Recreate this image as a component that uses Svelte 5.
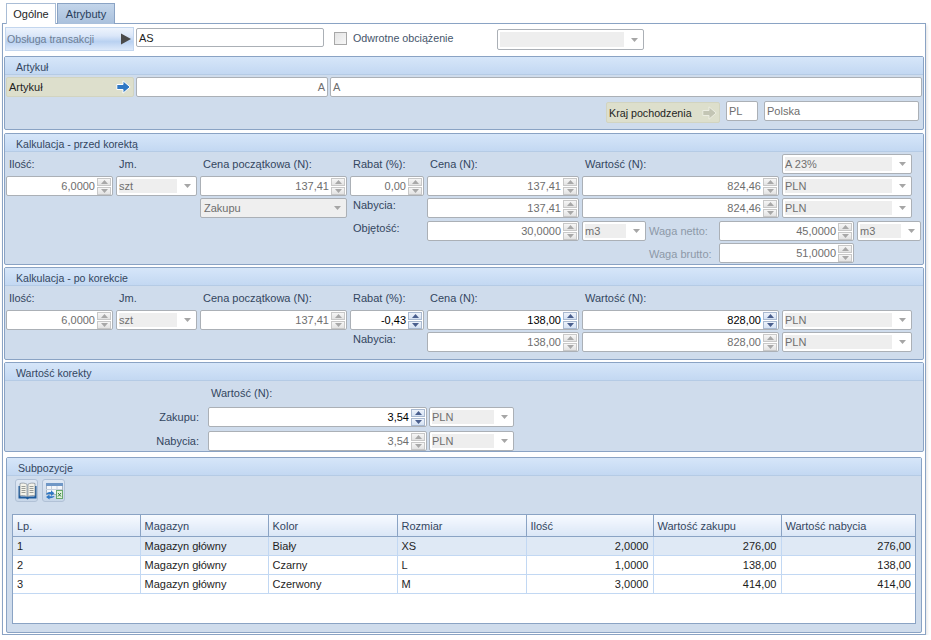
<script>
  const posRows = [
    { lp: 1, mag: 'Magazyn główny', kolor: 'Biały', rozmiar: 'XS', ilosc: '2,0000', zak: '276,00', nab: '276,00' },
    { lp: 2, mag: 'Magazyn główny', kolor: 'Czarny', rozmiar: 'L', ilosc: '1,0000', zak: '138,00', nab: '138,00' },
    { lp: 3, mag: 'Magazyn główny', kolor: 'Czerwony', rozmiar: 'M', ilosc: '3,0000', zak: '414,00', nab: '414,00' }
  ];
  const headers = ['Lp.', 'Magazyn', 'Kolor', 'Rozmiar', 'Ilość', 'Wartość zakupu', 'Wartość nabycia'];
</script>

{#snippet spin(value, pos, active = false)}
  <div class="field spin {pos}" class:active>
    <span class="val">{value}</span>
    <span class="arrows">
      <span class="arr"><svg width="7" height="4" viewBox="0 0 7 4"><path d="M3.5 0 7 4H0z" /></svg></span>
      <span class="arr"><svg width="7" height="4" viewBox="0 0 7 4"><path d="M0 0h7L3.5 4z" /></svg></span>
    </span>
  </div>
{/snippet}

{#snippet combo(value, pos)}
  <div class="field combo {pos}">
    <span class="inner">{value}</span>
    <svg class="drop" width="7" height="4" viewBox="0 0 7 4"><path d="M0 0h7L3.500 4z" /></svg>
  </div>
{/snippet}

{#snippet calcHead()}
  <span class="lbl head c1 r1">Ilość:</span>
  <span class="lbl head c2 r1">Jm.</span>
  <span class="lbl head c3 r1">Cena początkowa (N):</span>
  <span class="lbl head c4 r1">Rabat (%):</span>
  <span class="lbl head c5 r1">Cena (N):</span>
  <span class="lbl head c6 r1">Wartość (N):</span>
{/snippet}

<div class="tabs">
  <div class="tab on">Ogólne</div>
  <div class="tab">Atrybuty</div>
</div>

<div class="frame">
  <div class="toprow">
    <button class="btn-blue">
      <span>Obsługa transakcji</span>
      <svg width="12" height="12" viewBox="0 0 12 12"><path d="M1 0.500 11 6 1 11.500z" fill="#4a4a4a" /></svg>
    </button>
    <div class="field as">AS</div>
    <span class="check"></span>
    <span class="checklabel">Odwrotne obciążenie</span>
    <div class="field combo topcombo">
      <span class="inner"></span>
      <svg class="drop" width="7" height="4" viewBox="0 0 7 4"><path d="M0 0h7L3.500 4z" /></svg>
    </div>
  </div>

  <section class="panel art">
    <header>Artykuł</header>
    <div class="artrow">
      <button class="btn-olive art-btn">
        <span>Artykuł</span>
        <svg width="15" height="14" viewBox="0 0 15 14"><path d="M.8 4.500h6.200V.8L14.200 7 7 13.200V9.500H.8z" fill="#2f78c4" stroke="#fff" stroke-width="1" stroke-linejoin="round" /></svg>
      </button>
      <div class="field code">A</div>
      <div class="field name">A</div>
    </div>
    <div class="krajrow">
      <button class="btn-olive kraj-btn">
        <span>Kraj pochodzenia</span>
        <svg width="15" height="14" viewBox="0 0 15 14"><path d="M.8 4.500h6.200V.8L14.200 7 7 13.200V9.500H.8z" fill="#c3c5b4" stroke="#ecede2" stroke-width="1" stroke-linejoin="round" /></svg>
      </button>
      <div class="field dim pl">PL</div>
      <div class="field dim kraj">Polska</div>
    </div>
  </section>

  <section class="panel before">
    <header>Kalkulacja - przed korektą</header>
    <div class="calc calc-before">
      {@render calcHead()}
      {@render combo('A 23%', 'c9 r1')}

      {@render spin('6,0000', 'c1 r2')}
      {@render combo('szt', 'c2 r2')}
      {@render spin('137,41', 'c3 r2')}
      {@render spin('0,00', 'c4 r2')}
      {@render spin('137,41', 'c5 r2')}
      {@render spin('824,46', 'c6 r2')}
      {@render combo('PLN', 'c9 r2')}

      <div class="field combo flat c3 r3">
        <span class="inner">Zakupu</span>
        <svg class="drop" width="7" height="4" viewBox="0 0 7 4"><path d="M0 0h7L3.500 4z" /></svg>
      </div>
      <span class="lbl c4 r3">Nabycia:</span>
      {@render spin('137,41', 'c5 r3')}
      {@render spin('824,46', 'c6 r3')}
      {@render combo('PLN', 'c9 r3')}

      <span class="lbl c4 r4">Objętość:</span>
      {@render spin('30,0000', 'c5 r4')}
      {@render combo('m3', 'cm3 r4')}
      <span class="lbl mid off cw r4">Waga netto:</span>
      {@render spin('45,0000', 'cwv r4')}
      {@render combo('m3', 'cm3b r4')}

      <span class="lbl mid off cw r5">Waga brutto:</span>
      {@render spin('51,0000', 'cwv r5')}
    </div>
  </section>

  <section class="panel after">
    <header>Kalkulacja - po korekcie</header>
    <div class="calc calc-after">
      {@render calcHead()}

      {@render spin('6,0000', 'c1 r2')}
      {@render combo('szt', 'c2 r2')}
      {@render spin('137,41', 'c3 r2')}
      {@render spin('-0,43', 'c4 r2', true)}
      {@render spin('138,00', 'c5 r2', true)}
      {@render spin('828,00', 'c6 r2', true)}
      {@render combo('PLN', 'c9 r2')}

      <span class="lbl c4 r3">Nabycia:</span>
      {@render spin('138,00', 'c5 r3')}
      {@render spin('828,00', 'c6 r3')}
      {@render combo('PLN', 'c9 r3')}
    </div>
  </section>

  <section class="panel korekta">
    <header>Wartość korekty</header>
    <div class="kor">
      <span class="lbl head kor-h">Wartość (N):</span>
      <span class="lbl mid kor-l kr2">Zakupu:</span>
      {@render spin('3,54', 'kor-v kr2', true)}
      {@render combo('PLN', 'kor-c kr2')}
      <span class="lbl mid kor-l kr3">Nabycia:</span>
      {@render spin('3,54', 'kor-v kr3')}
      {@render combo('PLN', 'kor-c kr3')}
    </div>
  </section>

  <section class="panel sub">
    <header>Subpozycje</header>
    <div class="tools">
      <button class="tool" aria-label="Podgląd">
        <svg width="19" height="18" viewBox="0 0 19 18">
          <path d="M.5 4h2v10.500h14V4h2v12.500h-7.500l-1.500 1-1.500-1H.5z" fill="#1c5a9c" />
          <path d="M2 1.500c2.500-.7 5-.5 7 .8v12.200c-2-1-4.500-1.300-7-.8zM10 2.300c2-1.300 4.500-1.500 7-.8v12.200c-2.500-.5-5-.2-7 .8z" fill="#f4f3ea" stroke="#7f8a94" stroke-width=".7" />
          <path d="M3.500 4.500h4M3.500 6.500h4M3.500 8.500h4M3.500 10.500h4M11.500 4.500h4M11.500 6.500h4M11.500 8.500h4M11.500 10.500h4" stroke="#9a9d98" stroke-width="1" />
        </svg>
      </button>
      <button class="tool" aria-label="Eksport">
        <svg width="19" height="18" viewBox="0 0 19 18">
          <rect x="1.500" y="1.500" width="16" height="11" fill="#f3f6fa" stroke="#a9b4c2" />
          <rect x="1" y="1" width="17" height="3" fill="#6f97c6" />
          <path d="M1 7.500h16M6.500 4v8M12 4v8" stroke="#c4cfdc" stroke-width="1" />
          <rect x="11.500" y="8.500" width="6" height="8" fill="#dff0da" stroke="#6aa86f" />
          <path d="M13 11l3 3.500M16 11l-3 3.500" stroke="#2f7d3a" stroke-width="1" />
          <path d="M1 12.500c.3-1.700 2.500-2.700 5-2.300V8.500l3.500 2.800L6 14v-1.800c-2-.3-3.500 0-5 .3zM9.500 14c-.5 1.500-2.500 2.500-5 2.200V17.500L1 15l3.500-2.500v1.700c2 .2 3.500 0 5-.2z" fill="#2f78c4" />
        </svg>
      </button>
    </div>
    <div class="gridwrap">
      <table>
        <colgroup>
          <col class="w127" /><col class="w128" /><col class="w129" /><col class="w129" /><col class="w127" /><col class="w128" /><col />
        </colgroup>
        <thead>
          <tr>
            {#each headers as h}
              <th>{h}</th>
            {/each}
          </tr>
        </thead>
        <tbody>
          {#each posRows as row, i}
            <tr class:sel={i === 0}>
              <td>{row.lp}</td>
              <td>{row.mag}</td>
              <td>{row.kolor}</td>
              <td>{row.rozmiar}</td>
              <td class="num">{row.ilosc}</td>
              <td class="num">{row.zak}</td>
              <td class="num">{row.nab}</td>
            </tr>
          {/each}
        </tbody>
      </table>
    </div>
  </section>
</div>

<style>
  :global(body) {
    margin: 0;
    background: #fff;
    font-family: 'Liberation Sans', 'Noto Sans', sans-serif;
    font-size: 11px;
    color: #1e1e1e;
  }

  * {
    box-sizing: border-box;
  }

  .tabs {
    display: flex;
    height: 24px;
    padding: 3px 0 0 6px;
    gap: 1px;
    position: relative;
    z-index: 1;
  }

  .tab {
    height: 21px;
    padding-top: 4px;
    text-align: center;
    width: 58px;
    border: 1px solid #8aa3c4;
    border-bottom: 0;
    background: linear-gradient(#c3d5ea, #a9c0dc);
    color: #2a3f5c;
  }

  .tab.on {
    width: 50px;
    background: #fff;
    color: #1e1e1e;
    border-color: #a9bdd6;
  }

  .frame {
    margin-left: 2px;
    width: 924px;
    height: 612px;
    margin-top: -1px;
    border: 1px solid #8aa3c4;
    box-shadow: 1px 2px 3px rgba(0, 0, 0, 0.12);
    background: #fff;
  }

  .toprow {
    display: flex;
    align-items: flex-start;
    height: 32px;
    padding: 3px 0 0 2px;
  }

  button {
    font: inherit;
    display: flex;
    align-items: center;
    justify-content: space-between;
    padding: 0 2px 0 2px;
    cursor: default;
  }

  .btn-blue {
    width: 129px;
    height: 24px;
    padding: 0 1px;
    font-size: 10.6px;
    border: 1px solid #c3d6ee;
    background: linear-gradient(#eef4fd 0%, #dbe7f9 35%, #b9d1f1 62%, #dde9fa 100%);
    color: #6d7e95;
  }

  .btn-olive {
    background: #dddfcc;
    border: 1px solid #d2d4c0;
    border-radius: 2px;
    color: #1e1e1e;
  }

  .field {
    display: flex;
    align-items: center;
    height: 20px;
    background: #fff;
    border: 1px solid #abb0b6;
    border-radius: 2px;
    padding: 0 2px;
    min-width: 0;
  }

  .as {
    width: 188px;
    margin: 1px 0 0 2px;
    height: 19px;
  }

  .check {
    width: 13px;
    height: 13px;
    margin: 5px 0 0 10px;
    border: 1px solid #a8a8a8;
    background: linear-gradient(135deg, #e4e4e4, #f7f7f7);
  }

  .checklabel {
    margin: 5px 0 0 6px;
    width: 144px;
    font-size: 10.7px;
    color: #45556b;
  }

  .topcombo {
    width: 147px;
    height: 21px;
    margin-top: 2px;
  }

  .combo {
    justify-content: space-between;
    padding: 2px 5px 2px 2px;
    color: #6e6e6e;
  }

  .inner {
    display: block;
    flex: 1;
    height: 100%;
    margin-right: 7px;
    background: #eee;
    line-height: 15px;
  }

  .drop {
    fill: #a6a6a6;
    flex: none;
  }

  .flat {
    background: #efefef;
    padding-left: 3px;
  }

  .flat .inner {
    background: none;
  }

  .panel {
    margin-left: 1px;
    width: 920px;
    border: 1px solid #8aa3c4;
    border-radius: 2px;
    background: #cfdcec;
  }

  .panel header {
    height: 18px;
    padding: 3px 0 0 11px;
    line-height: 14px;
    font-size: 10.6px;
    background: linear-gradient(#d6e6f9, #c3d8f2);
    border-bottom: 1px solid #b5cbe5;
    color: #33465f;
  }

  .art {
    height: 74px;
  }

  .before {
    height: 132px;
    margin-top: 3px;
  }

  .after {
    height: 93px;
    margin-top: 2px;
  }

  .korekta {
    height: 90px;
    margin-top: 2px;
  }

  .sub {
    margin: 5px 0 0 3px;
    width: 916px;
    height: 176px;
    border-bottom-width: 1px;
  }

  .artrow {
    display: flex;
    gap: 2px;
    padding: 2px 1px 0 1px;
  }

  .art-btn {
    width: 128px;
    height: 20px;
  }

  .code {
    width: 192px;
    justify-content: flex-end;
    color: #6e6e6e;
  }

  .name {
    width: 592px;
    color: #6e6e6e;
  }

  .krajrow {
    display: flex;
    align-items: flex-start;
    padding: 4px 0 0 601px;
  }

  .kraj-btn {
    width: 114px;
    height: 21px;
    margin-top: 1px;
    font-size: 10.7px;
  }

  .dim {
    color: #6e6e6e;
  }

  .pl {
    width: 32px;
    margin-left: 6px;
  }

  .kraj {
    width: 155px;
    margin-left: 6px;
  }

  .calc {
    display: grid;
    grid-template-columns: 107px 81px 147px 74px 152px 64px 67px 60px 72px 55px 6px;
    column-gap: 3px;
    padding: 2px 0 0 1px;
  }

  .calc-before {
    grid-template-rows: 20px 20px 21px 20px 21px;
    row-gap: 2px;
  }

  .calc-after {
    grid-template-rows: 20px 20px 20px;
    row-gap: 2px;
  }

  .c1 { grid-column: 1; }
  .c2 { grid-column: 2; }
  .c3 { grid-column: 3; }
  .c4 { grid-column: 4; }
  .c5 { grid-column: 5; }
  .c6 { grid-column: 6 / 9; }
  .c9 { grid-column: 9 / 11; }
  .cm3 { grid-column: 6; }
  .cw { grid-column: 7; }
  .cwv { grid-column: 8 / 10; }
  .cm3b { grid-column: 10 / 12; }
  .r1 { grid-row: 1; }
  .r2 { grid-row: 2; }
  .r3 { grid-row: 3; }
  .r4 { grid-row: 4; }
  .r5 { grid-row: 5; }

  .lbl {
    padding-left: 3px;
    line-height: 14px;
    color: #33465f;
    white-space: nowrap;
  }

  .head {
    align-self: center;
  }

  .mid {
    align-self: center;
  }

  .off {
    color: #8d99a8;
    padding-left: 0;
  }

  .spin {
    padding: 0 1px 0 2px;
    color: #6e6e6e;
  }

  .spin.active {
    color: #000;
  }

  .val {
    flex: 1;
    text-align: right;
    padding-right: 2px;
  }

  .arrows {
    display: flex;
    flex-direction: column;
    gap: 1px;
    width: 14px;
    flex: none;
  }

  .arr {
    display: flex;
    align-items: center;
    justify-content: center;
    height: 8px;
    background: linear-gradient(#f6f6f6, #e3e3e3);
    border: 1px solid #c8c8c8;
    fill: #a8a8a8;
  }

  .active .arr {
    background: linear-gradient(#eef3fb, #d5e2f3);
    border-color: #a9b9d0;
    fill: #4a5f8e;
  }

  .kor {
    display: grid;
    grid-template-columns: 200px 219px 85px;
    column-gap: 2px;
    grid-template-rows: 20px 20px 20px;
    row-gap: 4px;
    padding: 2px 0 0 1px;
  }

  .kor-h {
    grid-column: 2;
    grid-row: 1;
  }

  .kor-l {
    grid-column: 1;
    text-align: right;
    padding-right: 7px;
  }

  .kor-v { grid-column: 2; }
  .kor-c { grid-column: 3; }
  .kr2 { grid-row: 2; }
  .kr3 { grid-row: 3; }

  .tools {
    display: flex;
    gap: 4px;
    padding: 3px 0 0 8px;
  }

  .tool {
    width: 23px;
    height: 23px;
    padding: 1px 0 0 1px;
    justify-content: center;
    border: 1px solid #b1c1d6;
    border-radius: 3px;
    background: linear-gradient(#dfe8f4, #c7d6e8);
  }

  .gridwrap {
    margin: 12px 0 0 5px;
    width: 904px;
    height: 110px;
    background: #fff;
    border: 1px solid #8aa3c4;
  }

  table {
    width: 100%;
    table-layout: fixed;
    border-collapse: collapse;
  }

  .w128 { width: 128px; }
  .w129 { width: 129px; }
  .w127 { width: 127px; }

  th {
    height: 21px;
    padding: 1px 4px 0;
    text-align: left;
    font-weight: normal;
    color: #33465f;
    background: linear-gradient(#f7faff, #dae6f6);
    border-right: 1px solid #8aa3c4;
    border-bottom: 1px solid #8aa3c4;
  }

  th:last-child,
  td:last-child {
    border-right: 0;
  }

  td {
    height: 19px;
    padding: 0 4px;
    border-right: 1px solid #c2d8f3;
    border-bottom: 1px solid #c2d8f3;
    color: #1e1e1e;
    white-space: nowrap;
  }

  .num {
    text-align: right;
  }

  tr.sel td {
    background: #dfe9f5;
  }
</style>
